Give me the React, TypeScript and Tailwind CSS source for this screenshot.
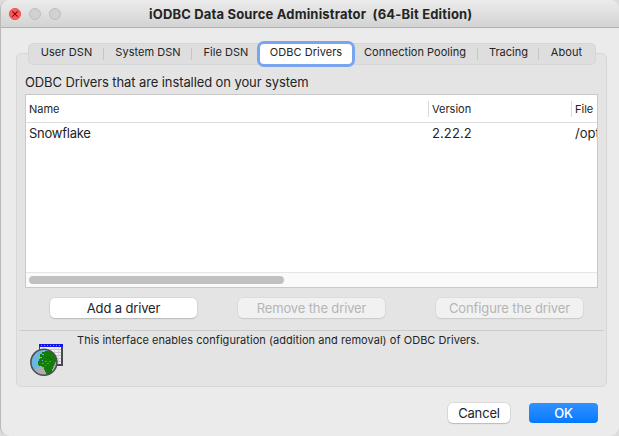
import React from "react";
import clsx from "clsx";

type Tab = { label: string; width: string; tracking: string; divider?: boolean; active?: boolean };

const tabs: Tab[] = [
  { label: "User DSN", width: "w-[75px]", tracking: "tracking-[0.1px]", divider: true },
  { label: "System DSN", width: "w-[88px]", tracking: "tracking-[0.04px]", divider: true },
  { label: "File DSN", width: "w-[68px]", tracking: "tracking-[0.02px]" },
  { label: "ODBC Drivers", width: "w-[92px]", tracking: "tracking-[0.03px]", active: true },
  { label: "Connection Pooling", width: "w-[126px]", tracking: "tracking-[0.02px]", divider: true },
  { label: "Tracing", width: "w-[61px]", tracking: "tracking-[0.02px]", divider: true },
  { label: "About", width: "w-[55px]", tracking: "tracking-[0.1px]" },
];

function TrafficLights() {
  return (
    <div className="flex w-[148px] shrink-0 items-center gap-2 pl-2">
      <svg width="12" height="12" viewBox="0 0 12 12">
        <circle cx="6" cy="6" r="5.6" fill="#fc5b57" stroke="#df4744" strokeWidth="0.8" />
        <path d="M3.3 3.3l5.4 5.4M8.7 3.3L3.3 8.7" stroke="#7e0508" strokeWidth="1.1" />
      </svg>
      <span className="size-3 rounded-full border border-[#bcbcbc] bg-[#d1d1d1]" />
      <span className="size-3 rounded-full border border-[#bcbcbc] bg-[#d1d1d1]" />
    </div>
  );
}

function TabBar() {
  return (
    <div className="relative z-10 -mb-3 ml-3 flex h-[22px] w-[568px] rounded-[5px] border border-[#d6d6d6] bg-[#dedede]">
      {tabs.map((t) => (
        <div
          key={t.label}
          className={clsx(
            "flex h-5 shrink-0 items-start justify-center text-[11px] leading-[14px] whitespace-nowrap",
            t.width,
            t.tracking,
            t.active && "rounded-[4px] bg-white ring-[3px] ring-[#78a5ee]",
            t.divider && "bg-[linear-gradient(#c6c6c6,#c6c6c6)] bg-[length:1px_12px] bg-[position:right_center] bg-no-repeat",
          )}
        >
          <span className="mt-px">{t.label}</span>
        </div>
      ))}
    </div>
  );
}

function DriverButton({ label, disabled, tracking }: { label: string; disabled?: boolean; tracking: string }) {
  return (
    <button
      className={clsx(
        "flex h-5 w-[147px] items-center justify-center rounded-[5px] pb-px text-[13px] leading-4 whitespace-nowrap",
        tracking,
        disabled
          ? "bg-[#f1f1f1] text-[#b5b5b5] shadow-[0_0_0_0.5px_#d3d3d3,0_1px_1px_#c4c4c4]"
          : "bg-white shadow-[0_0_0_0.5px_#cacaca,0_1px_1px_#b0b0b0]",
      )}
    >
      {label}
    </button>
  );
}

function GlobeIcon() {
  return (
    <svg width="34" height="34" viewBox="0 0 34 34" shapeRendering="crispEdges">
      <path d="M9 1h24v22H9z" fill="#4a484e" />
      <path d="M10 4h21v17H10z" fill="#f0f0f2" />
      <path d="M9 1h24v3H9z" fill="#1414ee" />
      <path d="M11 2h1v1h-1zM14 2h1v1h-1zM17 2h1v1h-1zM20 2h1v1h-1zM23 2h1v1h-1zM26 2h1v1h-1zM29 2h1v1h-1z" fill="#8e92ff" />
      <path d="M20 6h11v1H20zM22 9h9v1h-9zM24 12h7v1h-7zM26 15h5v1h-5zM26 18h5v1h-5z" fill="#c4c4ca" />
      <path d="M24 4h1v8h-1zM28 4h1v17h-1z" fill="#d4d4da" />
      <circle cx="13.9" cy="19.3" r="13.2" fill="#6bb8df" shapeRendering="auto" />
      <path d="M3 27l5-2 2-2 3 2 4-2 4-1 6-5c0 9-5 15-13 15-5 0-9-2-11-5z" fill="#adadae" />
      <path d="M20 9l4 4 2 6-2 6-5 2-1-6z" fill="#8f9595" />
      <path d="M10 11h2V9h3V8h6v1h2v2h1v2h2v6h-1v2h-1v2h-1v3h-1v3h-1v2h-1v1h-3v-1h-1v-2h-1v-2h-1v-3h-2v-1h-3v-1H8v-4h1v-2h1z" fill="#147d08" />
      <path d="M12 11h2v1h-2zM10 14h2v1h-2zM12 17h1v1h-1z" fill="#6bb8df" />
      <path d="M15 18h2v1h-2zM17 20h2v1h-2zM12 20h2v1h-2zM19 18h2v1h-2zM15 22h1v1h-1z" fill="#97802a" />
      <path d="M17 14h3v1h-3zM20 16h2v1h-2z" fill="#0f6807" />
      <circle cx="13.9" cy="19.3" r="13" fill="none" stroke="#505052" strokeWidth="1.6" shapeRendering="auto" />
    </svg>
  );
}

export default function App() {
  return (
    <div className="h-[436px] w-[619px] overflow-hidden bg-[#dcdcdc] font-['Inter','Liberation_Sans',sans-serif] text-[#242424]">
      <div className="flex h-full flex-col overflow-hidden rounded-[9px] border-l border-[#b9b9b9] bg-[#ebebeb]">
        <header className="flex h-7 shrink-0 items-center border-b border-[#b1b1b1] bg-linear-to-b from-[#ececec] to-[#d3d3d3]">
          <TrafficLights />
          <h1 className="text-[13px] leading-4 font-bold tracking-[0.17px] whitespace-pre">iODBC Data Source Administrator  (64-Bit Edition)</h1>
        </header>

        <main className="flex flex-col pt-[15px] pl-[15px]">
          <TabBar />
          <section className="flex h-[334px] w-[591px] flex-col rounded-[5px] border border-[#d7d7d7] bg-[#e4e4e4]">
            <h2 className="mt-5 ml-2 text-[13px] leading-4 tracking-[-0.1px] whitespace-nowrap">ODBC Drivers that are installed on your system</h2>

            <div className="mt-1 ml-2 flex h-[194px] w-[573px] flex-col overflow-hidden border border-[#c9c9c9] bg-white">
              <div className="flex h-7 shrink-0 items-center border-b border-[#dedede] text-[11px] leading-4">
                <span className="w-[402px] shrink-0 pl-[3px]">Name</span>
                <span className="w-[143px] shrink-0 border-l border-[#dadada] pl-[3px]">Version</span>
                <span className="shrink-0 border-l border-[#dadada] pl-[3px]">File</span>
              </div>
              <div className="flex h-5 shrink-0 items-center text-[13px] leading-4">
                <span className="w-[406px] shrink-0 pl-[3px] tracking-[-0.25px]">Snowflake</span>
                <span className="w-[143px] shrink-0 tracking-[0.1px]">2.22.2</span>
                <span className="shrink-0">/opt</span>
              </div>
              <div className="mt-auto flex h-[15px] shrink-0 items-center border-t border-[#e5e5e5] bg-[#fafafa] pl-[3px]">
                <div className="h-2 w-[255px] rounded-full bg-[#c1c1c1]" />
              </div>
            </div>

            <div className="mt-[10px] ml-[33px] flex gap-x-[41px]">
              <DriverButton label="Add a driver" tracking="tracking-[-0.15px]" />
              <DriverButton label="Remove the driver" tracking="tracking-[-0.13px]" disabled />
              <div className="ml-[10px]">
                <DriverButton label="Configure the driver" tracking="tracking-[-0.12px]" disabled />
              </div>
            </div>

            <div className="mt-3 ml-[2px] h-px w-[585px] bg-[#cccccc]" />
            <div className="flex pl-[13px]">
              <div className="mt-3 w-[47px] shrink-0">
                <GlobeIcon />
              </div>
              <p className="mt-px text-[11px] leading-4 tracking-[0.045px] whitespace-nowrap">
                This interface enables configuration (addition and removal) of ODBC Drivers.
              </p>
            </div>
          </section>
        </main>

        <footer className="mt-4 flex gap-[19px] pl-[447px] text-[13px] leading-4">
          <button className="flex h-5 w-[62px] items-center justify-center rounded-[5px] bg-white pb-px tracking-[-0.15px] shadow-[0_0_0_0.5px_#cacaca,0_1px_1px_#b0b0b0]">
            Cancel
          </button>
          <button className="flex h-5 w-[69px] items-center justify-center rounded-[4px] bg-linear-to-b from-[#2e91ff] to-[#007aff] pb-px font-medium tracking-[-0.2px] text-white">
            OK
          </button>
        </footer>
      </div>
    </div>
  );
}
